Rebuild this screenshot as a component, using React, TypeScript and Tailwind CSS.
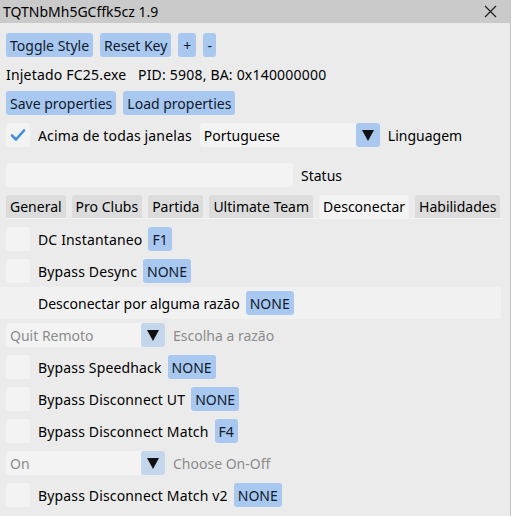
import React from "react";

const Btn = ({ children, className = "" }: { children: React.ReactNode; className?: string }) => (
  <div className={"h-[24px] px-[4px] flex items-center bg-[#a8c8ef] rounded-[3px] text-[#0f1a2e] whitespace-nowrap " + className}>{children}</div>
);

const Check = ({ checked = false, cls = "bg-[#f3f3f3]" }: { checked?: boolean; cls?: string }) => (
  <div className={"w-[24px] h-[24px] rounded-[3px] flex items-center justify-center " + cls}>
    {checked && (
      <svg width="16" height="14" viewBox="0 0 16 14">
        <path d="M2 7.5 L6 11.5 L14 2.5" stroke="#3f8ee0" strokeWidth="2.6" fill="none" strokeLinecap="round" strokeLinejoin="round" />
      </svg>
    )}
  </div>
);

const Arrow = () => (
  <svg width="12" height="11" viewBox="0 0 12 11">
    <path d="M0 0 L12 0 L6 11 Z" fill="#111" />
  </svg>
);

const Combo = ({ value, w, gray = false, arrowBg = "bg-[#a8c8ef]" }: { value: string; w: number; gray?: boolean; arrowBg?: string }) => (
  <div className="h-[24px] flex rounded-[3px] bg-[#f3f3f3]" style={{ width: w }}>
    <div className={"flex-1 flex items-center px-[4px] " + (gray ? "text-[#8c8c8c]" : "")}>{value}</div>
    <div className={"w-[24px] h-[24px] rounded-[3px] flex items-center justify-center " + arrowBg}>
      <Arrow />
    </div>
  </div>
);

const Row = ({ label, key_ }: { label: string; key_: string }) => (
  <div className="h-[24px] flex items-center">
    <Check />
    <div className="ml-[8px] tracking-[0.15px] whitespace-nowrap">{label}</div>
    <Btn className="ml-[6px]">{key_}</Btn>
  </div>
);

export default function App() {
  return (
    <div
      className="w-[511px] h-[516px] bg-[#ebebeb] text-black text-[14px] leading-[17px] relative overflow-hidden"
      style={{ fontFamily: '"Noto Sans", "DejaVu Sans", sans-serif' }}
    >
      <div className="h-[23px] bg-[#cacaca] flex items-center pl-[3px] relative">
        <span>TQTNbMh5GCffk5cz 1.9</span>
        <svg className="absolute right-[14px] top-[5px]" width="13" height="13" viewBox="0 0 13 13">
          <path d="M1 1 L12 12 M12 1 L1 12" stroke="#222" strokeWidth="1.3" />
        </svg>
      </div>
      <div className="absolute right-0 top-0 w-[1px] h-full bg-[#c4c4c4]" />
      <div className="flex flex-col px-[6px]">
        <div className="mt-[10px] flex gap-[7px]">
          <Btn>Toggle Style</Btn>
          <Btn>Reset Key</Btn>
          <Btn className="px-[5px]">+</Btn>
          <Btn className="px-[3px]">-</Btn>
        </div>
        <div className="mt-[6px] h-[23px] flex items-center whitespace-pre tracking-[0.2px]">Injetado FC25.exe   PID: 5908, BA: 0x140000000</div>
        <div className="mt-[5px] flex gap-[7px]">
          <Btn>Save properties</Btn>
          <Btn>Load properties</Btn>
        </div>
        <div className="mt-[8px] h-[24px] flex items-center">
          <Check checked />
          <div className="ml-[8px] tracking-[0.15px] whitespace-nowrap">Acima de todas janelas</div>
          <div className="ml-[8px]"><Combo value="Portuguese" w={180} /></div>
          <div className="ml-[8px]">Linguagem</div>
        </div>
        <div className="mt-[16px] h-[24px] flex items-center">
          <div className="w-[287px] h-[24px] bg-[#f3f3f3] rounded-[3px]" />
          <div className="ml-[8px]">Status</div>
        </div>
        <div className="mt-[8px] flex gap-[6px] h-[23px] items-end">
          {["General", "Pro Clubs", "Partida", "Ultimate Team", "Desconectar", "Habilidades"].map((t) => (
            <div
              key={t}
              className={"h-[23px] px-[4px] flex items-center rounded-t-[3px] whitespace-nowrap shrink-0 " + (t === "Desconectar" ? "bg-[#f3f3f3]" : "bg-[#dcdcdc]")}
            >
              {t}
            </div>
          ))}
        </div>
      </div>
      <div className="h-[1px] bg-[#f3f3f3] mx-[6px]" />
      <div className="flex flex-col gap-[8px] px-[6px] mt-[8px]">
        <Row label="DC Instantaneo" key_="F1" />
        <Row label="Bypass Desync" key_="NONE" />
        <div className="relative h-[24px]">
          <div className="absolute -left-[6px] right-[4px] -top-[4px] -bottom-[4px] bg-[#f1f1f1]" />
          <div className="relative h-[24px] flex items-center">
            <div className="w-[24px] h-[24px]" />
            <div className="ml-[8px]">Desconectar por alguma razão</div>
            <Btn className="ml-[6px]">NONE</Btn>
          </div>
        </div>
        <div className="h-[24px] flex items-center">
          <Combo value="Quit Remoto" w={159} gray arrowBg="bg-[#c4d6ec]" />
          <div className="ml-[8px] text-[#8c8c8c]">Escolha a razão</div>
        </div>
        <Row label="Bypass Speedhack" key_="NONE" />
        <Row label="Bypass Disconnect UT" key_="NONE" />
        <Row label="Bypass Disconnect Match" key_="F4" />
        <div className="h-[24px] flex items-center">
          <Combo value="On" w={159} gray arrowBg="bg-[#c4d6ec]" />
          <div className="ml-[8px] text-[#8c8c8c]">Choose On-Off</div>
        </div>
        <Row label="Bypass Disconnect Match v2" key_="NONE" />
      </div>
    </div>
  );
}
